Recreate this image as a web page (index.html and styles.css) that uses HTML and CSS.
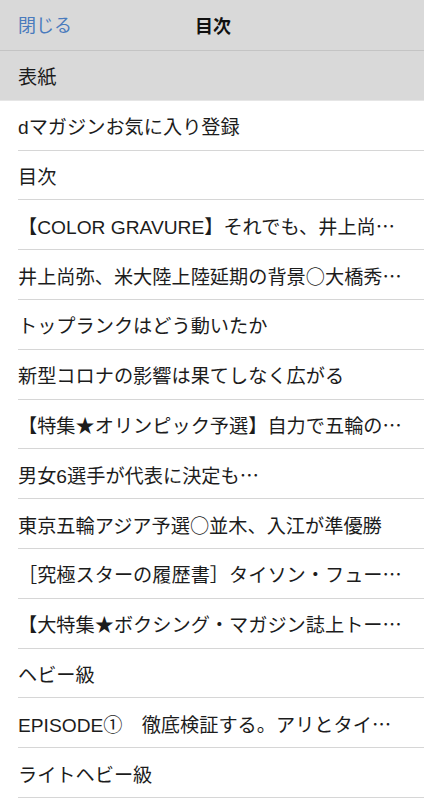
FILE: index.html
```html
<!DOCTYPE html>
<html lang="ja">
<head>
  <meta charset="utf-8">
  <title>目次</title>
  <link rel="stylesheet" href="styles.css">
</head>
<body>
  <!-- Top bar -->
  <div class="toc-header">
    <a class="close-link" href="#">閉じる</a>
    <span class="toc-title">目次</span>
  </div>

  <!-- Table of contents (long titles are shown cut, as the app does) -->
  <ul class="toc-list">
    <li class="toc-item current">表紙</li>
    <li class="toc-item">dマガジンお気に入り登録</li>
    <li class="toc-item">目次</li>
    <li class="toc-item">【COLOR GRAVURE】それでも、井上尚<span class="cjk">…</span></li>
    <li class="toc-item">井上尚弥、米大陸上陸延期の背景<span class="cjk">○</span>大橋秀<span class="cjk">…</span></li>
    <li class="toc-item">トップランクはどう動いたか</li>
    <li class="toc-item">新型コロナの影響は果てしなく広がる</li>
    <li class="toc-item">【特集★オリンピック予選】自力で五輪の<span class="cjk">…</span></li>
    <li class="toc-item">男女6選手が代表に決定も<span class="cjk">…</span></li>
    <li class="toc-item">東京五輪アジア予選<span class="cjk">○</span>並木、入江が準優勝</li>
    <li class="toc-item">［究極スターの履歴書］タイソン・フュー<span class="cjk">…</span></li>
    <li class="toc-item">【大特集★ボクシング・マガジン誌上トー<span class="cjk">…</span></li>
    <li class="toc-item">ヘビー級</li>
    <li class="toc-item">EPISODE①　徹底検証する。アリとタイ<span class="cjk">…</span></li>
    <li class="toc-item">ライトヘビー級</li>
  </ul>
</body>
</html>
```

FILE: styles.css
```css
body {
  margin: 0;
  font-family: "Liberation Sans", "Noto Sans CJK JP", sans-serif;
  color: #1c1c1c;
  background: #fff;
  overflow: hidden;
}

.toc-header {
  position: relative;
  height: 50px;
  display: flex;
  align-items: center;
  justify-content: center;
  background-color: #d9d9d9;
  border-bottom: 1px solid #c4c4c4;
}

.close-link {
  position: absolute;
  left: 18px;
  top: 0;
  line-height: 52px;
  font-size: 18px;
  color: #4a7bbd;
  text-decoration: none;
}

.toc-title {
  font-size: 18px;
  font-weight: bold;
  color: #111;
  margin-left: 2px;
}

.toc-list {
  list-style: none;
  margin: 0;
  padding: 0;
}

.toc-item {
  height: 49.8px;
  box-sizing: border-box;
  margin-left: 18px;
  padding-top: 2px;
  display: flex;
  align-items: center;
  white-space: nowrap;
  border-bottom: 1px solid #d6d6d6;
  font-size: 19.2px;
}

.toc-item .cjk {
  font-family: "Noto Sans CJK JP", sans-serif;
}

.toc-item.current {
  margin-left: 0;
  padding-left: 18px;
  background-color: #d9d9d9;
  border-bottom-color: #e6e6e6;
}
```
